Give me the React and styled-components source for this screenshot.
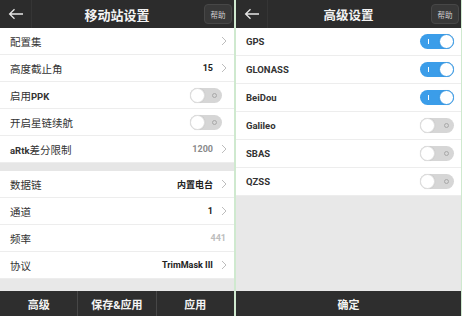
import React from 'react'
import styled, {createGlobalStyle} from 'styled-components'

const GlobalStyle = createGlobalStyle`
    html, body {
        margin: 0;
        padding: 0;
        width: 462px;
        height: 316px;
        overflow: hidden;
        background: #fff;
        font-family: Roboto, "Noto Sans CJK SC", sans-serif;
    }
`

const Screens = styled.div`
    display: flex;
    width: 462px;
    height: 316px;
`

const Panel = styled.section`
    display: flex;
    flex-direction: column;
    width: ${p => p.width}px;
    height: 316px;
    background: #e8e8e8;
    box-sizing: border-box;
    border-left: ${p => p.edge ? '2px solid #cfe9cf' : 'none'};
    border-right: ${p => p.edge ? '1px solid #cfe9cf' : 'none'};
`

const Header = styled.header`
    display: grid;
    grid-template-columns: 32px 1fr 32px;
    align-items: center;
    height: 28px;
    flex: none;
    background: #2c2c2c;
`

const BackButton = styled.div`
    display: flex;
    align-items: center;
    justify-content: center;
    height: 28px;
    border-right: 1px solid #353535;
`

const Title = styled.h1`
    margin: 0;
    text-align: center;
    color: #f2f2f2;
    font-size: ${p => p.size}px;
    font-weight: 700;
`

const HelpButton = styled.div`
    justify-self: end;
    margin-right: 2px;
    width: 28px;
    height: 20px;
    display: flex;
    align-items: center;
    justify-content: center;
    box-sizing: border-box;
    border: 1px solid #474747;
    border-radius: 4px;
    background: #383838;
    color: #cfcfcf;
    font-size: 7.5px;
`

const List = styled.div`
    display: flex;
    flex-direction: column;
    flex: none;
`

const Row = styled.div`
    display: flex;
    align-items: center;
    justify-content: space-between;
    height: ${p => p.h}px;
    box-sizing: border-box;
    padding: 0 ${p => p.padRight}px 0 10px;
    background: #fff;
    border-bottom: 1px solid #ededed;
`

const Label = styled.span`
    color: #333;
    font-size: ${p => p.latin ? 9.5 : 10.5}px;
    font-weight: ${p => p.latin ? 700 : 400};
    b {
        font-weight: 700;
        font-size: 9.5px;
    }
`

const Right = styled.div`
    display: flex;
    align-items: center;
    gap: 8px;
`

const Value = styled.span`
    font-size: 9px;
    font-weight: 700;
    color: ${p => p.muted ? '#bdbdbd' : p.soft ? '#8a8a8a' : '#222'};
`

const Band = styled.div`
    height: 8px;
    flex: none;
    background: #e6e6e6;
`

const Filler = styled.div`
    flex: 1;
    background: #e8e8e8;
`

const Footer = styled.footer`
    display: flex;
    height: 25px;
    flex: none;
    background: #2e2e2e;
`

const FooterButton = styled.div`
    flex: 1;
    display: flex;
    align-items: center;
    justify-content: center;
    color: #f4f4f4;
    font-size: 11px;
    font-weight: 700;
    & + & {
        border-left: 1px solid #474747;
    }
`

const Track = styled.div`
    position: relative;
    width: ${p => p.w}px;
    height: 15px;
    border-radius: 8px;
    box-sizing: border-box;
    background: ${p => p.on ? '#3b9de9' : '#d6d6d6'};
`

const Knob = styled.div`
    position: absolute;
    top: 0;
    ${p => p.on ? 'right: 0;' : 'left: 0;'}
    width: 15px;
    height: 15px;
    border-radius: 50%;
    background: #fff;
    box-sizing: border-box;
    border: 1px solid ${p => p.on ? '#3b9de9' : '#e0e0e0'};
    box-shadow: 0 0 1px rgba(0, 0, 0, 0.15);
`

const OnMark = styled.div`
    position: absolute;
    left: 8px;
    top: 5px;
    width: 1px;
    height: 5px;
    background: #fff;
`

const OffMark = styled.div`
    position: absolute;
    right: 5px;
    top: 5px;
    width: 5px;
    height: 5px;
    box-sizing: border-box;
    border: 1px solid #a8a8a8;
    border-radius: 50%;
`

const Arrow = () => (
    <svg width="16" height="12" viewBox="0 0 16 12">
        <path d="M15 6H2M6.5 1.2L1.6 6l4.9 4.8" fill="none" stroke="#e6e6e6" strokeWidth="1.3" />
    </svg>
)

const Chevron = () => (
    <svg width="6" height="10" viewBox="0 0 6 10">
        <path d="M1 1l4 4-4 4" fill="none" stroke="#bdbdbd" strokeWidth="1" />
    </svg>
)

const Toggle = ({on, w}) => (
    <Track on={on} w={w}>
        {on ? <OnMark /> : <OffMark />}
        <Knob on={on} />
    </Track>
)

const Top = ({title, size}) => (
    <Header>
        <BackButton><Arrow /></BackButton>
        <Title size={size}>{title}</Title>
        <HelpButton>帮助</HelpButton>
    </Header>
)

const Item = ({label, value, chevron, toggle, muted, soft}) => (
    <Row h={27} padRight={toggle !== undefined ? 12 : 7}>
        <Label>{label}</Label>
        <Right>
            {value && <Value muted={muted} soft={soft}>{value}</Value>}
            {chevron && <Chevron />}
            {toggle !== undefined && <Toggle on={toggle} w={32} />}
        </Right>
    </Row>
)

const systems = [
    {name: 'GPS', on: true},
    {name: 'GLONASS', on: true},
    {name: 'BeiDou', on: true},
    {name: 'Galileo', on: false},
    {name: 'SBAS', on: false},
    {name: 'QZSS', on: false},
]

export default function App() {
    return (
        <>
            <GlobalStyle />
            <Screens>
                <Panel width={234}>
                    <Top title="移动站设置" size={13} />
                    <List>
                        <Item label="配置集" chevron />
                        <Item label="高度截止角" value="15" chevron />
                        <Item label={<>启用<b>PPK</b></>} toggle={false} />
                        <Item label="开启星链续航" toggle={false} />
                        <Item label={<><b>aRtk</b>差分限制</>} value="1200" soft chevron />
                    </List>
                    <Band />
                    <List>
                        <Item label="数据链" value="内置电台" chevron />
                        <Item label="通道" value="1" chevron />
                        <Row h={27} padRight={8}>
                            <Label>频率</Label>
                            <Value muted>441</Value>
                        </Row>
                        <Item label="协议" value="TrimMask III" chevron />
                    </List>
                    <Filler />
                    <Footer>
                        <FooterButton>高级</FooterButton>
                        <FooterButton>保存&amp;应用</FooterButton>
                        <FooterButton>应用</FooterButton>
                    </Footer>
                </Panel>
                <Panel width={228} edge>
                    <Top title="高级设置" size={12.5} />
                    <List>
                        {systems.map(s => (
                            <Row key={s.name} h={28} padRight={7}>
                                <Label latin>{s.name}</Label>
                                <Toggle on={s.on} w={34} />
                            </Row>
                        ))}
                    </List>
                    <Filler />
                    <Footer>
                        <FooterButton>确定</FooterButton>
                    </Footer>
                </Panel>
            </Screens>
        </>
    )
}
